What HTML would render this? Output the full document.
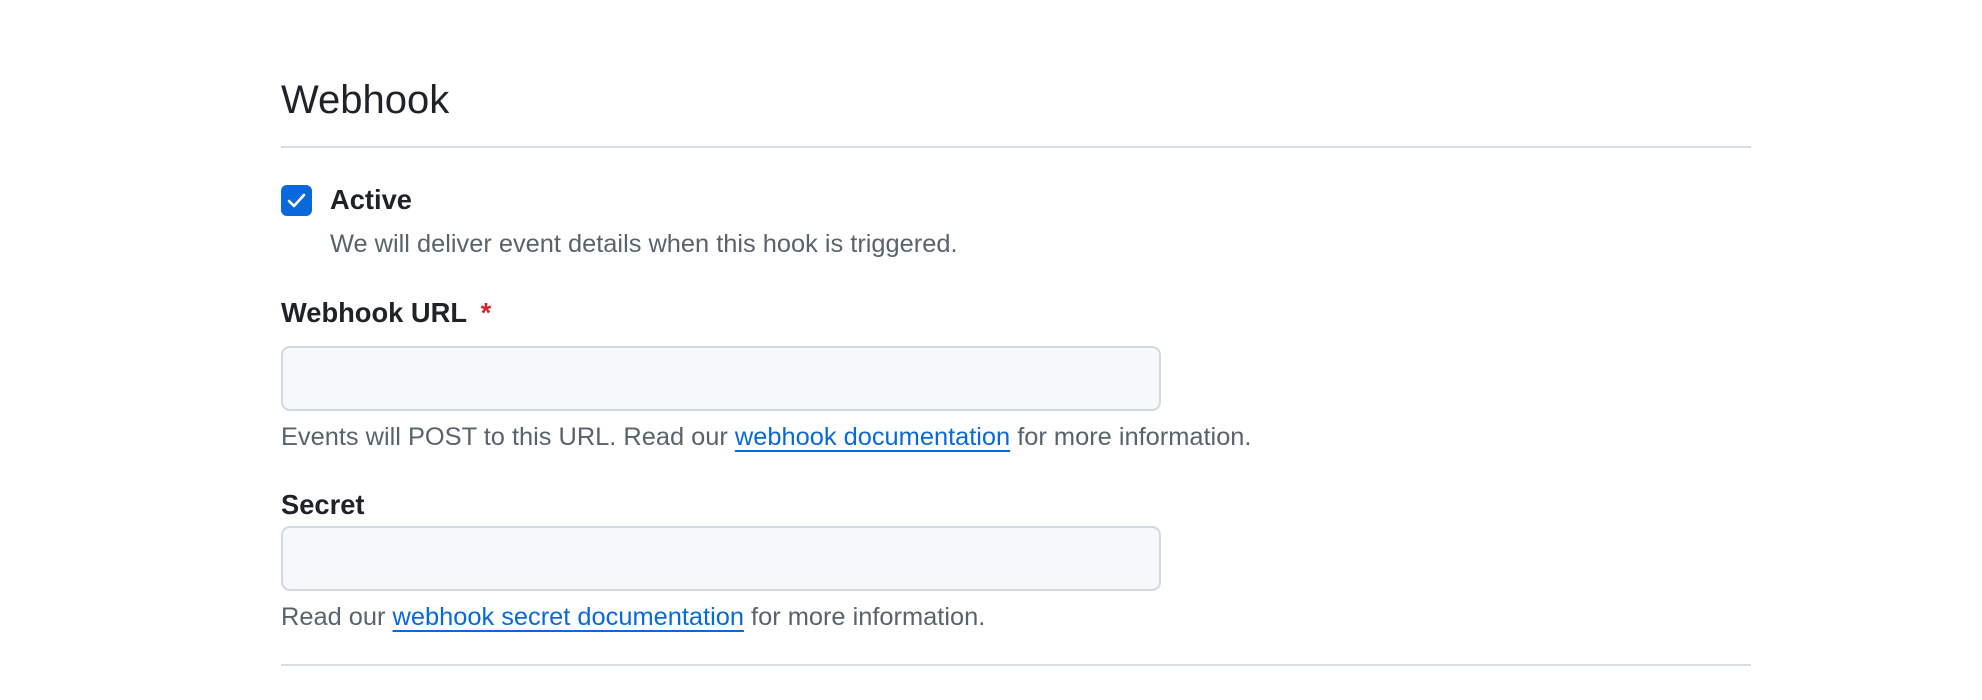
<!DOCTYPE html>
<html><head><style>
body{margin:0;width:1982px;height:700px;background:#fff;font-family:"Liberation Sans",sans-serif;position:relative;overflow:hidden;color:#1f2328}
.a{position:absolute;white-space:nowrap}
h2{position:absolute;left:281px;top:76px;margin:0;font-weight:400;font-size:40px;line-height:48px}
.hr{position:absolute;left:281px;width:1470px;height:2px;background:#d8dee4}
.cb{position:absolute;left:281px;top:185px;width:31px;height:31px;border-radius:6px;background:#0969da}
.lbl{font-weight:700;font-size:27.3px;line-height:32px}
.t{font-size:25.4px;line-height:30px;color:#59636e}
.in{position:absolute;left:281px;width:876px;height:61px;background:#f6f8fa;border:2px solid #d1d9e0;border-radius:9px}
a{color:#0969da;text-decoration:underline;text-underline-offset:5px;text-decoration-thickness:2px}
.r{color:#d1242f;margin-left:6px}
</style></head><body>
<h2>Webhook</h2>
<div class="hr" style="top:146px"></div>
<div class="cb"><svg width="31" height="31" viewBox="0 0 31 31"><path d="M8 16l5 5 10-11" fill="none" stroke="#fff" stroke-width="2.6" stroke-linecap="round" stroke-linejoin="round"/></svg></div>
<div class="a lbl" style="left:330px;top:184px">Active</div>
<div class="a t" style="left:330px;top:229px">We will deliver event details when this hook is triggered.</div>
<div class="a lbl" style="left:281px;top:297px">Webhook URL<span class="r"> *</span></div>
<div class="in" style="top:346px"></div>
<div class="a t" style="left:281px;top:422px">Events will POST to this URL. Read our <a>webhook documentation</a> for more information.</div>
<div class="a lbl" style="left:281px;top:489px">Secret</div>
<div class="in" style="top:526px"></div>
<div class="a t" style="left:281px;top:602px">Read our <a>webhook secret documentation</a> for more information.</div>
<div class="hr" style="top:664px"></div>
</body></html>
